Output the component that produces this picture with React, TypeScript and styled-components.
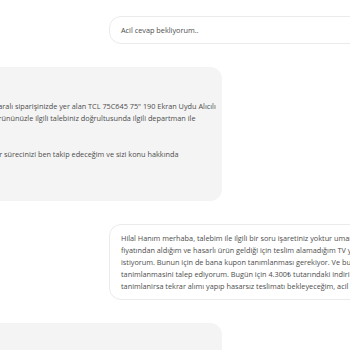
import React from 'react';
import styled, { createGlobalStyle } from 'styled-components';

const Global = createGlobalStyle`
  html, body { margin: 0; padding: 0; background: #ffffff; overflow: hidden; }
  body { font-family: "Open Sans", "Noto Sans", sans-serif; }
`;

const Thread = styled.main`
  display: flex;
  flex-direction: column;
  align-items: flex-start;
  gap: 23px;
  padding-top: 16px;
  width: 350px;
  height: 350px;
  overflow: hidden;
  box-sizing: border-box;
`;

const Bubble = styled.div<{ $side: 'user' | 'agent' }>`
  flex: none;
  box-sizing: border-box;
  border-radius: 12px;
  font-size: 7.3px;
  line-height: 12px;
  color: #4d4d4d;
  white-space: nowrap;
  ${(p) =>
    p.$side === 'user'
      ? `
    margin-left: 109px;
    width: 420px;
    padding: 7px 11px;
    background: #ffffff;
    border: 1px solid #ebebeb;
  `
      : `
    margin-left: -170px;
    width: 392px;
    padding: 9px 14px 5px;
    background: #f4f4f4;
  `}
`;

const Line = styled.div`
  min-height: 12px;
`;

const agentFirst = [
  'Merhaba Hilal Hanım,',
  '',
  'Talebinizi detaylı inceledim. 3001234567 numaralı siparişinizde yer alan TCL 75C645 75" 190 Ekran Uydu Alıcılı',
  'Android Smart 4K Ultra HD QLED Google TV ürününüzle ilgili talebiniz doğrultusunda ilgili departman ile',
  'iletişime geçilmiştir.',
  '',
  'Talebinizle ilgili tarafımıza dönüş alınana kadar sürecinizi ben takip edeceğim ve sizi konu hakkında',
  'bilgilendireceğim.',
  '',
  'İyi günler dilerim.',
];

const userSecond = [
  'Hilal Hanım merhaba, talebim ile ilgili bir soru işaretiniz yoktur umarım. Aynı ürünü indirimli',
  'fiyatından aldığım ve hasarlı ürün geldiği için teslim alamadığım TV yi tekrar almak',
  'istiyorum. Bunun için de bana kupon tanımlanması gerekiyor. Ve bu sebeple kupon',
  'tanimlanmasini talep ediyorum. Bugün için 4.300₺ tutarındaki indirim kuponu',
  'tanimlanirsa tekrar alımı yapıp hasarsız teslimatı bekleyeceğim, acil dönüş bekliyorum.',
];

const agentLast = [
  'Merhaba,',
  '',
  'Talebiniz ilgili birime iletilmiştir.',
  '',
  'İyi günler dilerim.',
];

export default function App() {
  return (
    <>
      <Global />
      <Thread>
        <Bubble $side="user">
          <Line>Acil cevap bekliyorum..</Line>
        </Bubble>
        <Bubble $side="agent">
          {agentFirst.map((t, i) => (
            <Line key={i}>{t}</Line>
          ))}
        </Bubble>
        <Bubble $side="user">
          {userSecond.map((t, i) => (
            <Line key={i}>{t}</Line>
          ))}
        </Bubble>
        <Bubble $side="agent">
          {agentLast.map((t, i) => (
            <Line key={i}>{t}</Line>
          ))}
        </Bubble>
      </Thread>
    </>
  );
}
